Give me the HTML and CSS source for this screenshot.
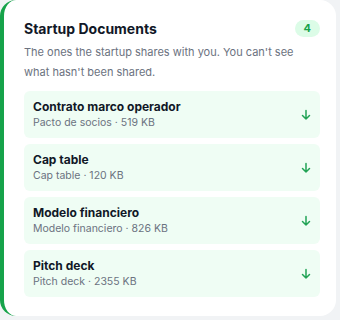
FILE: index.html
```html
<!DOCTYPE html>
<html lang="en">
<head>
	<meta charset="UTF-8">
	<title>Startup Documents</title>
	<link rel="stylesheet" href="styles.css">
</head>
<body>
	<div class="card">
		<div class="card-head">
			<h2 class="card-title">Startup Documents</h2>
			<span class="badge">4</span>
		</div>
		<p class="card-desc">The ones the startup shares with you. You can't see what hasn't been shared.</p>

		<ul class="docs">
			<li class="doc">
				<div class="doc-info">
					<div class="doc-name">Contrato marco operador</div>
					<div class="doc-meta">Pacto de socios · 519 KB</div>
				</div>
				<svg class="doc-dl" width="12" height="12" viewBox="0 0 12 12"><path d="M6 1.5v8.5M2.5 6.5 6 10l3.5-3.5"/></svg>
			</li>
			<li class="doc">
				<div class="doc-info">
					<div class="doc-name">Cap table</div>
					<div class="doc-meta">Cap table · 120 KB</div>
				</div>
				<svg class="doc-dl" width="12" height="12" viewBox="0 0 12 12"><path d="M6 1.5v8.5M2.5 6.5 6 10l3.5-3.5"/></svg>
			</li>
			<li class="doc">
				<div class="doc-info">
					<div class="doc-name">Modelo financiero</div>
					<div class="doc-meta">Modelo financiero · 826 KB</div>
				</div>
				<svg class="doc-dl" width="12" height="12" viewBox="0 0 12 12"><path d="M6 1.5v8.5M2.5 6.5 6 10l3.5-3.5"/></svg>
			</li>
			<li class="doc">
				<div class="doc-info">
					<div class="doc-name">Pitch deck</div>
					<div class="doc-meta">Pitch deck · 2355 KB</div>
				</div>
				<svg class="doc-dl" width="12" height="12" viewBox="0 0 12 12"><path d="M6 1.5v8.5M2.5 6.5 6 10l3.5-3.5"/></svg>
			</li>
		</ul>
	</div>
</body>
</html>
```

FILE: styles.css
```css
* {
	margin: 0;
	padding: 0;
	box-sizing: border-box;
}

body {
	background: #f1f3f5;
	font-family: Inter, "Noto Sans", sans-serif;
	color: #111827;
}

.card {
	width: 336px;
	height: 316px;
	background: #fff;
	border-left: 4px solid #16a34a;
	border-radius: 16px;
	padding: 17px 16px 0 20px;
}

.card-head {
	display: flex;
	align-items: center;
	justify-content: space-between;
	height: 22px;
}

.card-title {
	font-size: 14px;
	font-weight: 700;
	color: #111827;
}

.badge {
	background: #dcfce7;
	color: #16a34a;
	font-size: 11px;
	font-weight: 700;
	border-radius: 10px;
	padding: 1px 9px;
	line-height: 15px;
}

.card-desc {
	margin-top: 3px;
	font-size: 11px;
	line-height: 20px;
	color: #6b7280;
}

.docs {
	list-style: none;
	margin-top: 9px;
	display: flex;
	flex-direction: column;
	gap: 6px;
}

.doc {
	display: flex;
	align-items: center;
	justify-content: space-between;
	height: 47px;
	background: #effdf4;
	border-radius: 6px;
	padding: 0 8px 0 9px;
}

.doc-name {
	font-size: 12px;
	font-weight: 700;
	line-height: 17px;
	color: #111827;
}

.doc-meta {
	font-size: 10.5px;
	line-height: 16px;
	color: #6b7280;
}

.doc-dl {
	fill: none;
	stroke: #22a355;
	stroke-width: 1.5;
	stroke-linecap: round;
	stroke-linejoin: round;
}
```
